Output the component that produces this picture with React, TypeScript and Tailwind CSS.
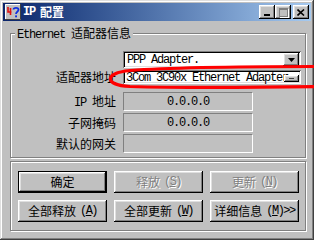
import React from "react";

const raised =
  "bg-[#c0c0c0] shadow-[inset_-1px_-1px_#000,inset_1px_1px_#fff,inset_-2px_-2px_#808080,inset_2px_2px_#dfdfdf]";
const sunken =
  "shadow-[inset_1px_1px_#808080,inset_-1px_-1px_#fff,inset_2px_2px_#000,inset_-2px_-2px_#dfdfdf]";
const etched =
  "border border-[#808080] shadow-[inset_1px_1px_#fff,1px_1px_#fff]";

const L = ({ children }: { children: React.ReactNode }) => (
  <span className="font-['Liberation_Mono',monospace] text-[12px] tracking-[-1.2px]">
    {children}
  </span>
);

const AppIcon = () => (
  <svg width="16" height="16" viewBox="0 0 16 16">
    <rect x="0" y="0" width="16" height="16" fill="#c0c0c0" />
    <path d="M0 15.5H15.5V0" stroke="#404040" fill="none" />
    <path d="M0.5 15V0.5H15" stroke="#fff" fill="none" />
    <path d="M3 3V8H6.5M5.5 4V11" stroke="#e01010" strokeWidth="1.6" fill="none" />
    <path
      d="M8.5 5.5C8.5 3.5 13.5 3.2 13.5 5.8C13.5 7.6 11 8 11 10"
      stroke="#1030e0"
      strokeWidth="1.8"
      fill="none"
    />
    <rect x="10.1" y="11.4" width="1.9" height="1.9" fill="#1030e0" />
  </svg>
);

const CapButton = ({ children, gap }: { children: React.ReactNode; gap?: boolean }) => (
  <div
    className={`w-[16px] h-[14px] flex items-center justify-center ${raised} ${
      gap ? "ml-[2px]" : ""
    }`}
  >
    {children}
  </div>
);

const TitleBar = () => (
  <div className="h-[18px] flex items-center pl-[2px] pr-[2px] bg-linear-to-r from-[#0a246a] to-[#a6caf0]">
    <AppIcon />
    <div className="ml-[2px] text-white font-bold text-[12px] leading-[14px] flex items-center">
      <span className="font-['Liberation_Mono',monospace] tracking-[-1.2px]">IP</span>
      <span className="ml-[5px]">配置</span>
    </div>
    <div className="ml-auto flex">
      <CapButton>
        <div className="w-[6px] h-[2px] bg-black mt-[6px] -ml-[1px]" />
      </CapButton>
      <CapButton>
        <div className="w-[9px] h-[9px] border border-[#808080] border-t-2 shadow-[1px_1px_#fff]" />
      </CapButton>
      <CapButton gap>
        <svg width="8" height="7" viewBox="0 0 8 7">
          <path d="M0.5 0.5L7 6.5M7 0.5L0.5 6.5" stroke="#000" strokeWidth="1.6" />
        </svg>
      </CapButton>
    </div>
  </div>
);

const Field = ({ label, value }: { label: React.ReactNode; value?: string }) => (
  <div className="flex items-center h-[19px]">
    <div className="w-[105px] text-right">{label}</div>
    <div className="ml-[7px] w-[130px] h-[19px] border-t border-l border-[#808080] border-b border-r border-b-white border-r-white flex items-center justify-center">
      {value && <L>{value}</L>}
    </div>
  </div>
);

const Btn = ({
  children,
  def,
  disabled,
}: {
  children: React.ReactNode;
  def?: boolean;
  disabled?: boolean;
}) => (
  <div
    className={`w-[89px] h-[22px] flex items-center justify-center ${
      def
        ? "border border-black bg-[#c0c0c0] shadow-[inset_-1px_-1px_#000,inset_1px_1px_#fff,inset_-2px_-2px_#808080,inset_2px_2px_#dfdfdf]"
        : raised
    } ${disabled ? "text-[#808080] [text-shadow:1px_1px_#fff]" : "text-black"}`}
  >
    {children}
  </div>
);

const Mn = ({ k }: { k: string }) => (
  <span className="ml-[4px] font-['Liberation_Mono',monospace] text-[12px] tracking-[-1.5px]">
    (<u>{k}</u>)
  </span>
);

export default function App() {
  return (
    <div className="relative w-[314px] h-[240px] bg-[#c0c0c0] p-[3px] flex flex-col font-['Noto_Sans_CJK_SC',sans-serif] text-[12px] leading-[14px] text-black shadow-[inset_-1px_-1px_#404040,inset_1px_1px_#dfdfdf,inset_-2px_-2px_#808080,inset_2px_2px_#fff] overflow-hidden">
      <TitleBar />
      <div className="flex-1 flex flex-col">
        <div className={`relative mt-[12px] ml-[7px] w-[296px] pt-[17px] pb-[4px] ${etched}`}>
          <div className="absolute -top-[8px] left-[4px] px-[2px] bg-[#c0c0c0] leading-[14px]">
            <L>Ethernet</L>
            <span className="ml-[6px]">适配器信息</span>
          </div>

          <div className="flex">
            <div className="ml-[112px] w-[178px] h-[17px] bg-white flex items-center pl-[4px] shadow-[inset_1px_1px_#808080,inset_-1px_-1px_#fff,inset_2px_2px_#000,inset_-2px_-2px_#dfdfdf]">
              <L>PPP Adapter.</L>
              <div className={`ml-auto mr-[2px] w-[16px] h-[13px] flex items-center justify-center ${raised}`}>
                <svg width="7" height="4" viewBox="0 0 7 4">
                  <path d="M0 0H7L3.5 4Z" fill="#000" />
                </svg>
              </div>
            </div>
          </div>

          <div className="flex items-center mt-[2px] h-[14px]">
            <div className="w-[105px] text-right">适配器地址</div>
            <div className={`ml-[7px] w-[178px] h-[14px] bg-white flex items-center pl-[3px] overflow-hidden relative ${sunken}`}>
              <span className="whitespace-nowrap">
                <L>3Com 3C90x Ethernet Adapter</L>
              </span>
              <div className={`absolute right-[2px] top-[5px] w-[15px] h-[7px] flex items-center justify-center ${raised}`}>
                <div className="w-[5px] h-[1px] bg-[#404040]" />
              </div>
            </div>
          </div>

          <div className="mt-[8px] flex flex-col gap-[2px]">
            <Field
              label={
                <>
                  <L>IP</L>
                  <span className="ml-[6px]">地址</span>
                </>
              }
              value="0.0.0.0"
            />
            <Field label="子网掩码" value="0.0.0.0" />
            <Field label="默认的网关" />
          </div>
        </div>

        <div className={`mt-[3px] ml-[7px] w-[296px] pt-[9px] pl-[7px] pb-[8px] ${etched}`}>
          <div className="grid grid-cols-[89px_89px_89px] gap-x-[7px] gap-y-[7px]">
            <Btn def>确定</Btn>
            <Btn disabled>
              释放<Mn k="S" />
            </Btn>
            <Btn disabled>
              更新<Mn k="N" />
            </Btn>
            <Btn>
              全部释放<Mn k="A" />
            </Btn>
            <Btn>
              全部更新<Mn k="W" />
            </Btn>
            <Btn>
              详细信息<Mn k="M" />
              <span className="font-['Liberation_Mono',monospace] tracking-[-1.5px]">&gt;&gt;</span>
            </Btn>
          </div>
        </div>
      </div>

      <svg
        className="absolute left-0 top-0 pointer-events-none"
        width="314"
        height="240"
        viewBox="0 0 314 240"
      >
        <path
          d="M330 66.5C250 66.5 170 67.5 130 70.5C104 73 104 85 130 86.5C180 88 260 87.5 330 86.5"
          stroke="#ff0000"
          strokeWidth="3.2"
          fill="none"
          strokeLinecap="round"
        />
      </svg>
    </div>
  );
}
